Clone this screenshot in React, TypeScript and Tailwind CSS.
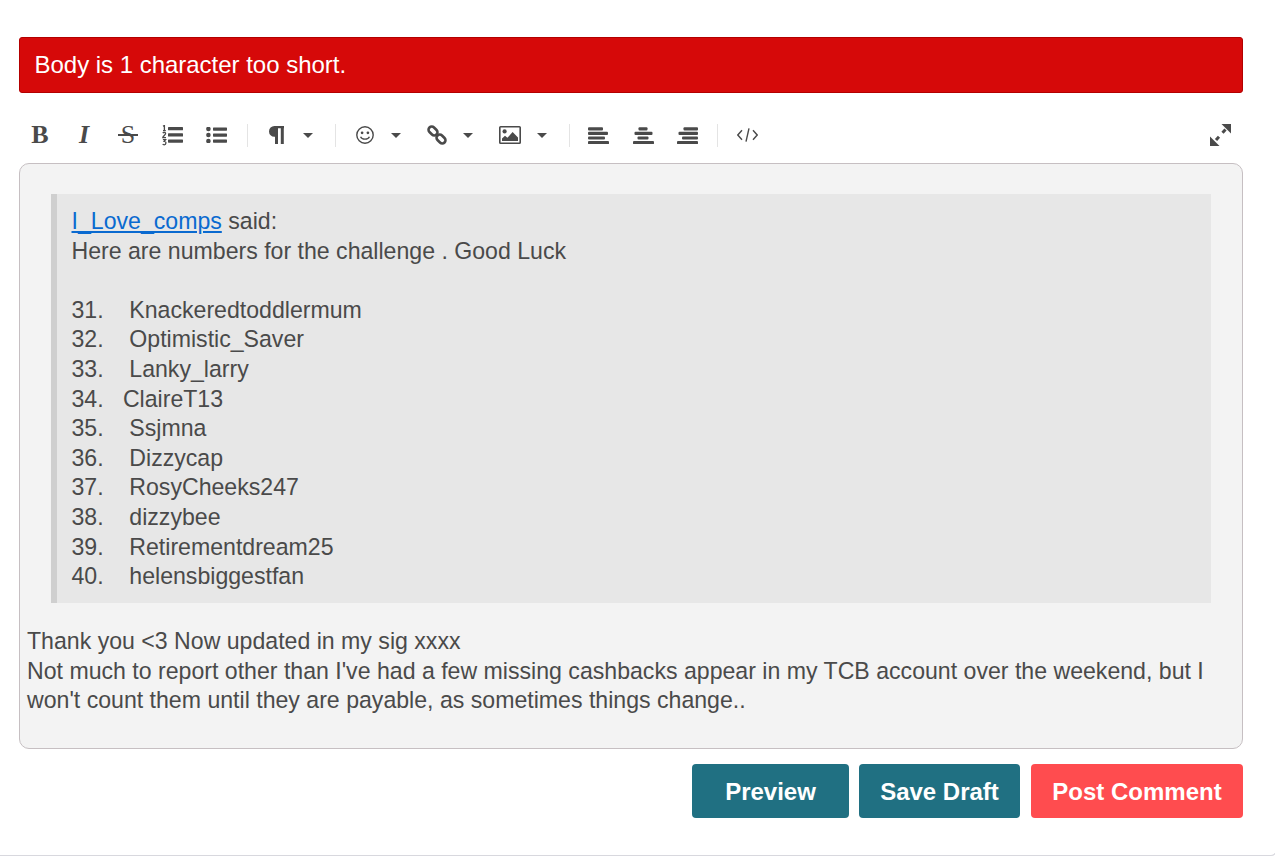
const C = "#4a4a4a";

const Caret = ({ ml }: { ml: string }) => (
  <svg width="10" height="5" viewBox="0 0 10 5" className={ml}>
    <path d="M0 0H10L5 5Z" fill={C} />
  </svg>
);
const Sep = ({ ml }: { ml: string }) => <span className={`w-px h-[23px] bg-[#e4e4e4] ${ml}`} />;

const Bars = ({ bars }: { bars: [number, number][] }) => (
  <svg width="21" height="17" viewBox="0 0 21 17">
    {bars.map(([x, w], i) => (
      <rect key={i} x={x} y={i * 4.6 + 0.2} width={w} height="3.2" rx="1" fill={C} />
    ))}
  </svg>
);

const rows = [
  "31.    Knackeredtoddlermum",
  "32.    Optimistic_Saver",
  "33.    Lanky_larry",
  "34.   ClaireT13",
  "35.    Ssjmna",
  "36.    Dizzycap",
  "37.    RosyCheeks247",
  "38.    dizzybee",
  "39.    Retirementdream25",
  "40.    helensbiggestfan",
];

export default function App() {
  return (
    <div className="h-[856px] bg-white overflow-hidden font-['Liberation_Sans',Arial,sans-serif]">
      <div className="w-[1277px] h-[856px] border-b border-r border-[#d8d8de] rounded-br-[6px] pl-[19px] pt-[37px]">
        <div className="w-[1224px] h-[56px] bg-[#d60909] border border-[#b30000] rounded-[3px] flex items-center pl-[14.5px] text-white text-[24px]">
          <span className="tracking-[-0.02px]">Body is 1 character too short.</span>
        </div>

        <div className="w-[1224px] h-[70px] pt-[14px] flex items-center text-[#4a4a4a]">
          <span className="ml-[11px] w-[20px] text-center font-['Liberation_Serif',serif] font-bold text-[26px] leading-[20px]">B</span>
          <span className="ml-[24px] w-[20px] text-center font-['Liberation_Serif',serif] font-bold italic text-[26px] leading-[20px]">I</span>
          <span className="relative ml-[24px] w-[20px] text-center font-['Liberation_Serif',serif] text-[26px] leading-[20px]">
            S
            <span className="absolute left-0 right-0 top-[9px] h-[2px] bg-[#4a4a4a]" />
          </span>
          <svg className="ml-[24px]" width="21" height="21" viewBox="0 0 21 21">
            <g fill="none" stroke={C} strokeWidth="1.3">
              <path d="M1 1.2L2.4 0.6V5.6M1 5.6H3.8" />
              <path d="M0.8 8.2C1.5 7 3.6 7.2 3.6 8.6C3.6 10 1 11 0.8 12.6H4" />
              <path d="M0.9 14.6H3.6L2.2 16.4C4.6 16.4 4.4 19.8 2.2 19.8C1.5 19.8 1 19.5 0.7 19" />
            </g>
            <rect x="6" y="2" width="15" height="3.3" rx="0.6" fill={C} />
            <rect x="6" y="8.2" width="15" height="3.3" rx="0.6" fill={C} />
            <rect x="6" y="14.4" width="15" height="3.3" rx="0.6" fill={C} />
          </svg>
          <svg className="ml-[23px]" width="21" height="16" viewBox="0 0 21 16">
            <circle cx="2.4" cy="2" r="2.3" fill={C} />
            <circle cx="2.4" cy="8" r="2.3" fill={C} />
            <circle cx="2.4" cy="14" r="2.3" fill={C} />
            <rect x="7" y="0.4" width="14" height="3.3" rx="0.6" fill={C} />
            <rect x="7" y="6.4" width="14" height="3.3" rx="0.6" fill={C} />
            <rect x="7" y="12.4" width="14" height="3.3" rx="0.6" fill={C} />
          </svg>
          <Sep ml="ml-[20px]" />
          <svg className="ml-[21px]" width="15" height="18" viewBox="0 0 15 18">
            <path d="M5.4 0H15V2.2H14.8V18H11.8V2.2H9V18H6V10.8H5.4A5.4 5.4 0 0 1 5.4 0Z" fill={C} />
          </svg>
          <Caret ml="ml-[19px]" />
          <Sep ml="ml-[22px]" />
          <svg className="ml-[20px]" width="18" height="18" viewBox="0 0 18 18" fill="none">
            <circle cx="9" cy="9" r="8.2" stroke={C} strokeWidth="1.4" />
            <circle cx="6.1" cy="6.8" r="1.35" fill={C} />
            <circle cx="11.9" cy="6.8" r="1.35" fill={C} />
            <path d="M4.6 10.8C5.8 14 12.2 14 13.4 10.8" stroke={C} strokeWidth="1.3" />
          </svg>
          <Caret ml="ml-[17px]" />
          <svg className="ml-[26px]" width="20" height="20" viewBox="0 0 20 20" fill="none">
            <rect x="1" y="2.8" width="10" height="6.4" rx="3.2" transform="rotate(45 6 6)" stroke={C} strokeWidth="2.6" />
            <rect x="9" y="10.8" width="10" height="6.4" rx="3.2" transform="rotate(45 14 14)" stroke={C} strokeWidth="2.6" />
          </svg>
          <Caret ml="ml-[16px]" />
          <svg className="ml-[26px]" width="22" height="18" viewBox="0 0 22 18">
            <rect x="0.8" y="0.8" width="20.4" height="16.4" rx="0.8" fill="none" stroke={C} strokeWidth="1.6" />
            <circle cx="5.6" cy="5.4" r="2.1" fill={C} />
            <path d="M3 15V12.6L6 9.8L8.4 11.8L13.6 6L19 11.4V15Z" fill={C} />
          </svg>
          <Caret ml="ml-[16px]" />
          <Sep ml="ml-[22px]" />
          <span className="ml-[18px] flex"><Bars bars={[[0, 15], [0, 20], [0, 17], [0, 21]]} /></span>
          <span className="ml-[24px] flex"><Bars bars={[[5.5, 9], [1.5, 18], [4.5, 11], [0, 21]]} /></span>
          <span className="ml-[23px] flex"><Bars bars={[[6.5, 14.5], [1.5, 19.5], [5, 16], [0, 21]]} /></span>
          <Sep ml="ml-[19px]" />
          <svg className="ml-[19px]" width="21" height="14" viewBox="0 0 21 14" fill="none" stroke={C} strokeWidth="1.4">
            <path d="M5 2.2L0.8 7L5 11.8" />
            <path d="M16 2.2L20.2 7L16 11.8" />
            <path d="M12 0.4L9 13.6" />
          </svg>
          <svg className="ml-auto mr-[12px]" width="21" height="22" viewBox="0 0 21 22">
            <path d="M11.5 0H21V9.5Z" fill={C} />
            <path d="M0 22V12.5L9.5 22Z" fill={C} />
            <path d="M15.5 5.5L12.5 8.8M9 12.8L6 16" stroke={C} strokeWidth="3" fill="none" />
          </svg>
        </div>

        <div className="w-[1224px] h-[586px] bg-[#f3f3f3] border border-[#c6bfc2] rounded-[10px] pl-[7px] pr-[7px] pt-[30px] text-[#4a4a4a] text-[23.12px] leading-[29.6px]">
          <div className="ml-[24px] mr-[24px] h-[409px] bg-[#e7e7e7] border-l-[6px] border-[#cfcfcf] pl-[14.5px] pt-[13px] whitespace-pre">
            <div><a className="text-[#0a6ad0] underline">I_Love_comps</a> said:</div>
            <div>Here are numbers for the challenge . Good Luck</div>
            <div className="h-[29.6px]" />
            {rows.map((r) => <div key={r}>{r}</div>)}
          </div>
          <div className="mt-[24px]">
            <div>Thank you &lt;3 Now updated in my sig xxxx</div>
            <div>Not much to report other than I've had a few missing cashbacks appear in my TCB account over the weekend, but I won't count them until they are payable, as sometimes things change..</div>
          </div>
        </div>

        <div className="w-[1224px] mt-[15px] flex justify-end text-white font-bold text-[24px]">
          <button className="w-[157px] h-[54px] rounded-[4px] bg-[#207082] pt-[1px]">Preview</button>
          <button className="ml-[10px] w-[161px] h-[54px] rounded-[4px] bg-[#207082] pt-[1px]">Save Draft</button>
          <button className="ml-[11px] w-[212px] h-[54px] rounded-[4px] bg-[#ff4c4f] pt-[1px]">Post Comment</button>
        </div>
      </div>
    </div>
  );
}
